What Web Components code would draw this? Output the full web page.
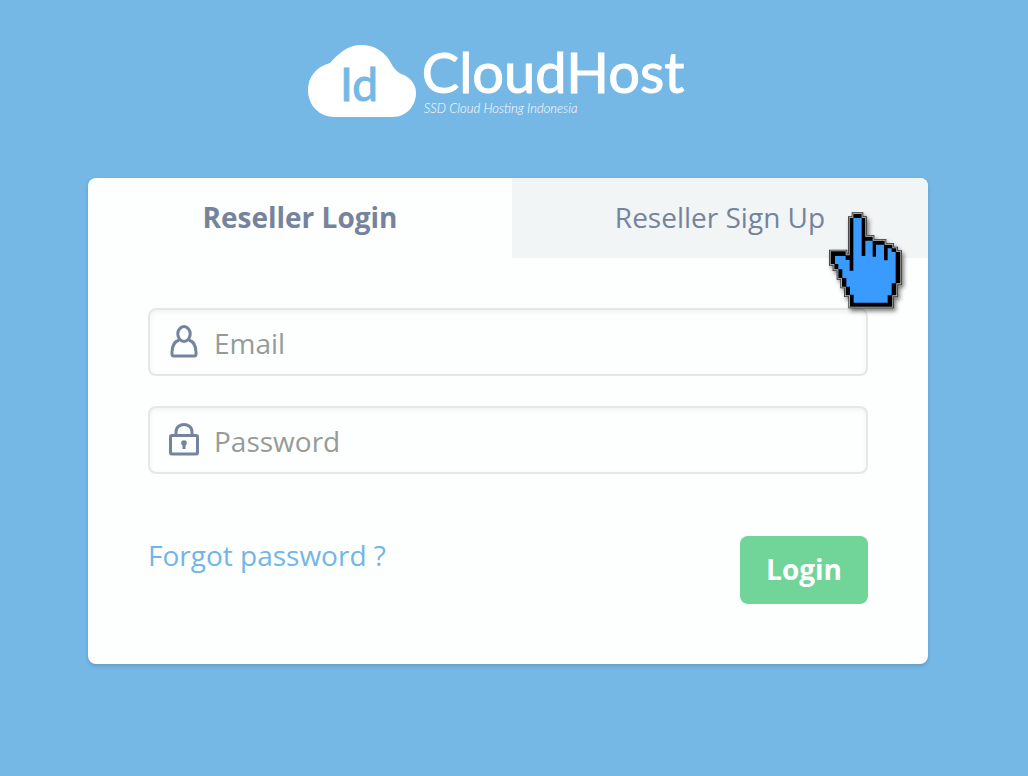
<!DOCTYPE html>
<html lang="en">
<head>
<meta charset="utf-8">
<meta name="viewport" content="width=device-width, initial-scale=1">
<title>CloudHost - Reseller Login</title>
<style>
  body { margin: 0; min-height: 100vh; background: #75b8e6; font: 28px/38px "Open Sans", sans-serif; color: #75849c; }
</style>
</head>
<body>
<login-page></login-page>

<script>
// Attach an open shadow root and fill it with the given markup
function stamp(el, html) {
  const tpl = document.createElement('template');
  tpl.innerHTML = html;
  const root = el.attachShadow({ mode: 'open' });
  root.appendChild(tpl.content.cloneNode(true));
  return root;
}

class BrandLogo extends HTMLElement {
  constructor() {
    super();
    stamp(this, `
      <style>
        :host { display: flex; align-items: flex-start; gap: 6px; color: #fff; font-family: Lato, sans-serif; }
        svg { display: block; flex: none; }
        svg text { font: 46px Lato, sans-serif; fill: #75b8e6; stroke: #75b8e6; }
        .name { font-size: 56px; line-height: 56px; -webkit-text-stroke: 1px #fff; }
        .tagline { padding-left: 2px; font-size: 13px; line-height: 16px; font-style: italic; font-weight: 300; }
      </style>
      <svg width="108" height="76" viewBox="0 0 108 76" role="img" aria-label="Id">
        <path fill="#fff" d="M27 73C11 73 0 61 0 46C0 33 8 23 22 19C31 9 40 1 53 1C67 1 77 8 83 19C86 25 90 29 96 31C104 35 108 42 108 49C108 62 98 73 85 73Z"/>
        <text x="32" y="57">Id</text>
      </svg>
      <div>
        <div class="name">CloudHost</div>
        <div class="tagline">SSD Cloud Hosting Indonesia</div>
      </div>
    `);
  }
}
customElements.define('brand-logo', BrandLogo);

class TabBar extends HTMLElement {
  constructor() {
    super();
    stamp(this, `
      <style>
        :host { display: block; }
        .tabs { display: grid; grid-template-columns: 53fr 52fr; }
        button { border: 0; margin: 0; padding: 20px 0 22px; background: #f1f5f6; color: inherit; font: inherit; cursor: pointer; }
        button[aria-selected="true"] { background: none; font-weight: 700; }
      </style>
      <div class="tabs" role="tablist">
        <button type="button" role="tab" aria-selected="true">Reseller Login</button>
        <button type="button" role="tab" aria-selected="false">Reseller Sign Up</button>
      </div>
    `);
  }
}
customElements.define('tab-bar', TabBar);

// <icon-field type="email" label="Email"><svg slot="icon">...</svg></icon-field>
class IconField extends HTMLElement {
  constructor() {
    super();
    const root = stamp(this, `
      <style>
        :host { display: block; }
        label { display: flex; align-items: center; gap: 14px; padding: 0 18px; border: 2px solid #e4e7e4; border-radius: 8px; box-shadow: inset 0 2px 4px #f0f2f0; }
        input { flex: 1; min-width: 0; height: 64px; box-sizing: border-box; padding: 2px 0 0; border: 0; outline: 0; background: none; color: inherit; font: inherit; }
        input::placeholder { color: #969b98; opacity: 1; }
      </style>
      <label>
        <slot name="icon"></slot>
        <input>
      </label>
    `);
    this.$input = root.querySelector('input');
  }

  connectedCallback() {
    const label = this.getAttribute('label');
    this.$input.type = this.getAttribute('type') || 'text';
    this.$input.placeholder = label;
    this.$input.setAttribute('aria-label', label);
  }
}
customElements.define('icon-field', IconField);

class HandPointer extends HTMLElement {
  constructor() {
    super();
    stamp(this, `
      <style>
        :host { display: block; pointer-events: none; }
        svg { display: block; filter: drop-shadow(2px 3px 2px rgba(0,0,0,.5)); }
      </style>
      <svg width="115" height="120" viewBox="0 0 345 360" aria-hidden="true">
        <defs>
          <path id="hand" d="M115 42H140V54H151V110H173V122H209V134H232V145H244V156H256V250H244V286H232V320H105V286H92V260H81V234H70V208H58V192H47V154H92V166H104V54H115Z"/>
        </defs>
        <use href="#hand" fill="none" stroke="#333" stroke-width="10"/>
        <use href="#hand" fill="#000" stroke="#c4c4c4" stroke-width="5"/>
        <use href="#hand" fill="#000"/>
        <path fill="#3a9bff" d="M115 54H140V168H151V122H173V170H183V134H207V181H218V145H230V156H242V250H230V286H218V308H116V284H105V260H94V234H82V208H70V192H60V168H92V180H104V212H115Z"/>
      </svg>
    `);
  }
}
customElements.define('hand-pointer', HandPointer);

class LoginPage extends HTMLElement {
  constructor() {
    super();
    stamp(this, `
      <style>
        :host { display: block; padding: 44px 100px 48px 88px; }
        header { display: flex; justify-content: center; padding: 0 24px 58px 0; }
        .card { position: relative; background: #fdfefe; border-radius: 8px; box-shadow: 0 2px 4px rgba(0,0,0,.16); }
        tab-bar { overflow: hidden; border-radius: 8px 8px 0 0; }
        form { display: flex; flex-direction: column; gap: 30px; padding: 50px 60px 60px; }
        .actions { display: flex; justify-content: space-between; align-items: flex-start; margin-top: 32px; }
        a { color: #72b6e6; text-decoration: none; }
        .submit { border: 0; border-radius: 8px; padding: 14px 26px 16px; background: #71d59a; color: #fff; font: inherit; font-weight: 700; cursor: pointer; }
        hand-pointer { position: absolute; top: 22px; right: -2px; }
        svg { display: block; flex: none; fill: none; stroke: #75849c; stroke-width: 3; stroke-linejoin: round; }
      </style>
      <header><brand-logo></brand-logo></header>
      <main class="card">
        <tab-bar></tab-bar>
        <form>
          <icon-field type="email" label="Email">
            <svg slot="icon" width="32" height="36" viewBox="0 0 32 36">
              <ellipse cx="16" cy="10" rx="6.2" ry="7.4"/>
              <path d="M11 16C6 18 4 22 4 28V30Q4 32 6 32H26Q28 32 28 30V28C28 22 26 18 21 16"/>
            </svg>
          </icon-field>
          <icon-field type="password" label="Password">
            <svg slot="icon" width="32" height="36" viewBox="0 0 32 36">
              <path d="M8 13V10C8 0 24 0 24 10V13"/>
              <rect x="2.5" y="13.5" width="27" height="18.5" rx="1.5"/>
              <circle cx="16" cy="21" r="2.8" fill="#75849c" stroke="none"/>
              <path d="M16 21V27"/>
            </svg>
          </icon-field>
          <div class="actions">
            <a href="#forgot">Forgot password ?</a>
            <button class="submit" type="submit">Login</button>
          </div>
        </form>
        <hand-pointer></hand-pointer>
      </main>
    `);
  }
}
customElements.define('login-page', LoginPage);
</script>
</body>
</html>
